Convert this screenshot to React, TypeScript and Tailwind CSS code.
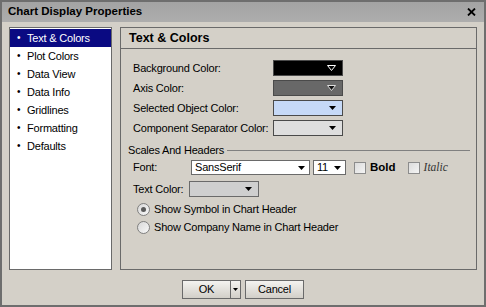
import React from 'react';

const items = ['Text & Colors', 'Plot Colors', 'Data View', 'Data Info', 'Gridlines', 'Formatting', 'Defaults'];

function Arrow({ kind }: { kind: 'hollow' | 'outlined' | 'solid' }) {
  if (kind === 'hollow') {
    return (
      <svg width="9" height="6" viewBox="0 0 9 6">
        <path d="M0.5 0.5 L8.5 0.5 L4.5 5.5 Z" fill="none" stroke="#fff" strokeWidth="1" />
      </svg>
    );
  }
  if (kind === 'outlined') {
    return (
      <svg width="9" height="6" viewBox="0 0 9 6">
        <path d="M0.5 0.5 L8.5 0.5 L4.5 5.5 Z" fill="#111" stroke="#ddd" strokeWidth="1" />
      </svg>
    );
  }
  return (
    <svg width="7" height="4" viewBox="0 0 7 4">
      <path d="M0 0 L7 0 L3.5 4 Z" fill="#000" />
    </svg>
  );
}

function Swatch({ bg, kind }: { bg: string; kind: 'hollow' | 'outlined' | 'solid' }) {
  return (
    <div className={`w-[70px] h-[16px] shrink-0 border border-[#4a4a4a] flex items-center justify-end pr-[6px] ${bg}`}>
      <Arrow kind={kind} />
    </div>
  );
}

function Checkbox() {
  return <div className="w-[12px] h-[12px] border border-[#8c8c8c] bg-gradient-to-br from-[#dcdcdc] to-[#f4f4f4]" />;
}

function Radio({ on }: { on?: boolean }) {
  return (
    <div className="w-[13px] h-[13px] rounded-full border border-[#7f7f7f] bg-gradient-to-br from-[#d8d8d8] to-[#f8f8f8] flex items-center justify-center">
      {on && <div className="w-[5px] h-[5px] rounded-full bg-[#5a5a5a]" />}
    </div>
  );
}

export default function App() {
  const rows: { label: string; bg: string; kind: 'hollow' | 'outlined' | 'solid' }[] = [
    { label: 'Background Color:', bg: 'bg-black', kind: 'hollow' },
    { label: 'Axis Color:', bg: 'bg-[#686868]', kind: 'outlined' },
    { label: 'Selected Object Color:', bg: 'bg-[#c6d9f7]', kind: 'solid' },
    { label: 'Component Separator Color:', bg: 'bg-[#dedede]', kind: 'solid' },
  ];

  return (
    <div className="w-[486px] h-[307px] bg-[#d4d0c8] border-2 border-[#6e6e6e] flex flex-col font-['Liberation_Sans',Arial,sans-serif] text-[11px] tracking-[-0.2px] text-black overflow-hidden whitespace-nowrap">
      {/* title bar */}
      <div className="h-[20px] bg-gradient-to-b from-[#a3a3a3] to-[#adadad] flex items-center justify-between pl-[6px] pr-[8px] shrink-0">
        <span className="font-bold text-[11.5px] tracking-normal">Chart Display Properties</span>
        <svg width="9" height="8" viewBox="0 0 9 8">
          <path d="M1 0.5 L8 7.5 M8 0.5 L1 7.5" stroke="#000" strokeWidth="1.8" />
        </svg>
      </div>

      <div className="flex pt-[5px] pl-[7px] pr-[7px] gap-[8px] h-[248px] shrink-0">
        {/* nav list */}
        <div className="w-[103px] h-[243px] bg-white border border-[#6a6a6a] pt-[1px]">
          {items.map((item, i) => (
            <div
              key={item}
              className={`h-[18px] flex items-center pl-[7px] ${i === 0 ? 'bg-[#0a0a82] text-white' : ''}`}
            >
              <span className="w-[10px] text-[10px] leading-none">•</span>
              <span>{item}</span>
            </div>
          ))}
        </div>

        {/* panel */}
        <div className="flex-1 h-[243px] border border-[#6a6a6a] flex flex-col">
          <div className="h-[21px] shrink-0 flex items-center pl-[8px] pt-[1px] border-b border-[#6a6a6a]">
            <span className="font-bold text-[12.5px] tracking-normal">Text & Colors</span>
          </div>

          <div className="pl-[12px] pt-[11px] flex flex-col gap-[4px]">
            {rows.map((r) => (
              <div key={r.label} className="flex items-center h-[16px]">
                <span className="w-[140px] shrink-0">{r.label}</span>
                <Swatch bg={r.bg} kind={r.kind} />
              </div>
            ))}
          </div>

          <div className="flex items-center pl-[7px] pr-[6px] mt-[6px] h-[16px]">
            <span>Scales And Headers</span>
            <div className="flex-1 h-px bg-[#808080] ml-[3px]" />
          </div>

          <div className="pl-[12px] mt-[2px] flex items-center h-[15px]">
            <span className="w-[58px]">Font:</span>
            <div className="w-[119px] h-[15px] bg-white border border-[#6a6a6a] flex items-center justify-between pl-[3px] pr-[4px]">
              <span>SansSerif</span>
              <Arrow kind="solid" />
            </div>
            <div className="ml-[3px] w-[33px] h-[15px] bg-white border border-[#6a6a6a] flex items-center justify-between pl-[3px] pr-[4px]">
              <span>11</span>
              <Arrow kind="solid" />
            </div>
            <div className="ml-[8px]">
              <Checkbox />
            </div>
            <span className="ml-[4px] font-bold text-[11.5px] tracking-normal">Bold</span>
            <div className="ml-[12px]">
              <Checkbox />
            </div>
            <span className="ml-[4px] italic font-['Liberation_Serif',serif] text-[11.5px] tracking-normal text-[#333]">Italic</span>
          </div>

          <div className="pl-[12px] mt-[6px] flex items-center h-[16px]">
            <span className="w-[56px]">Text Color:</span>
            <div className="w-[70px] h-[16px] bg-[#cfcfcf] border border-[#6a6a6a] flex items-center justify-end pr-[6px]">
              <Arrow kind="solid" />
            </div>
          </div>

          <div className="pl-[16px] mt-[6px] flex flex-col gap-[5px]">
            <div className="flex items-center gap-[4px] h-[13px]">
              <Radio on />
              <span>Show Symbol in Chart Header</span>
            </div>
            <div className="flex items-center gap-[4px] h-[13px]">
              <Radio />
              <span>Show Company Name in Chart Header</span>
            </div>
          </div>
        </div>
      </div>

      {/* footer buttons */}
      <div className="flex justify-center pt-[10px] gap-[4px]">
        <div className="flex h-[19px] border border-[#6a6a6a] bg-gradient-to-b from-[#f4f3f0] to-[#d2cfc8]">
          <div className="w-[48px] flex items-center justify-center border-r border-[#6a6a6a]">OK</div>
          <div className="w-[9px] flex items-center justify-center">
            <svg width="5" height="3" viewBox="0 0 5 3">
              <path d="M0 0 L5 0 L2.5 3 Z" fill="#000" />
            </svg>
          </div>
        </div>
        <div className="w-[59px] h-[19px] border border-[#6a6a6a] bg-gradient-to-b from-[#f4f3f0] to-[#d2cfc8] flex items-center justify-center">
          Cancel
        </div>
      </div>
    </div>
  );
}
